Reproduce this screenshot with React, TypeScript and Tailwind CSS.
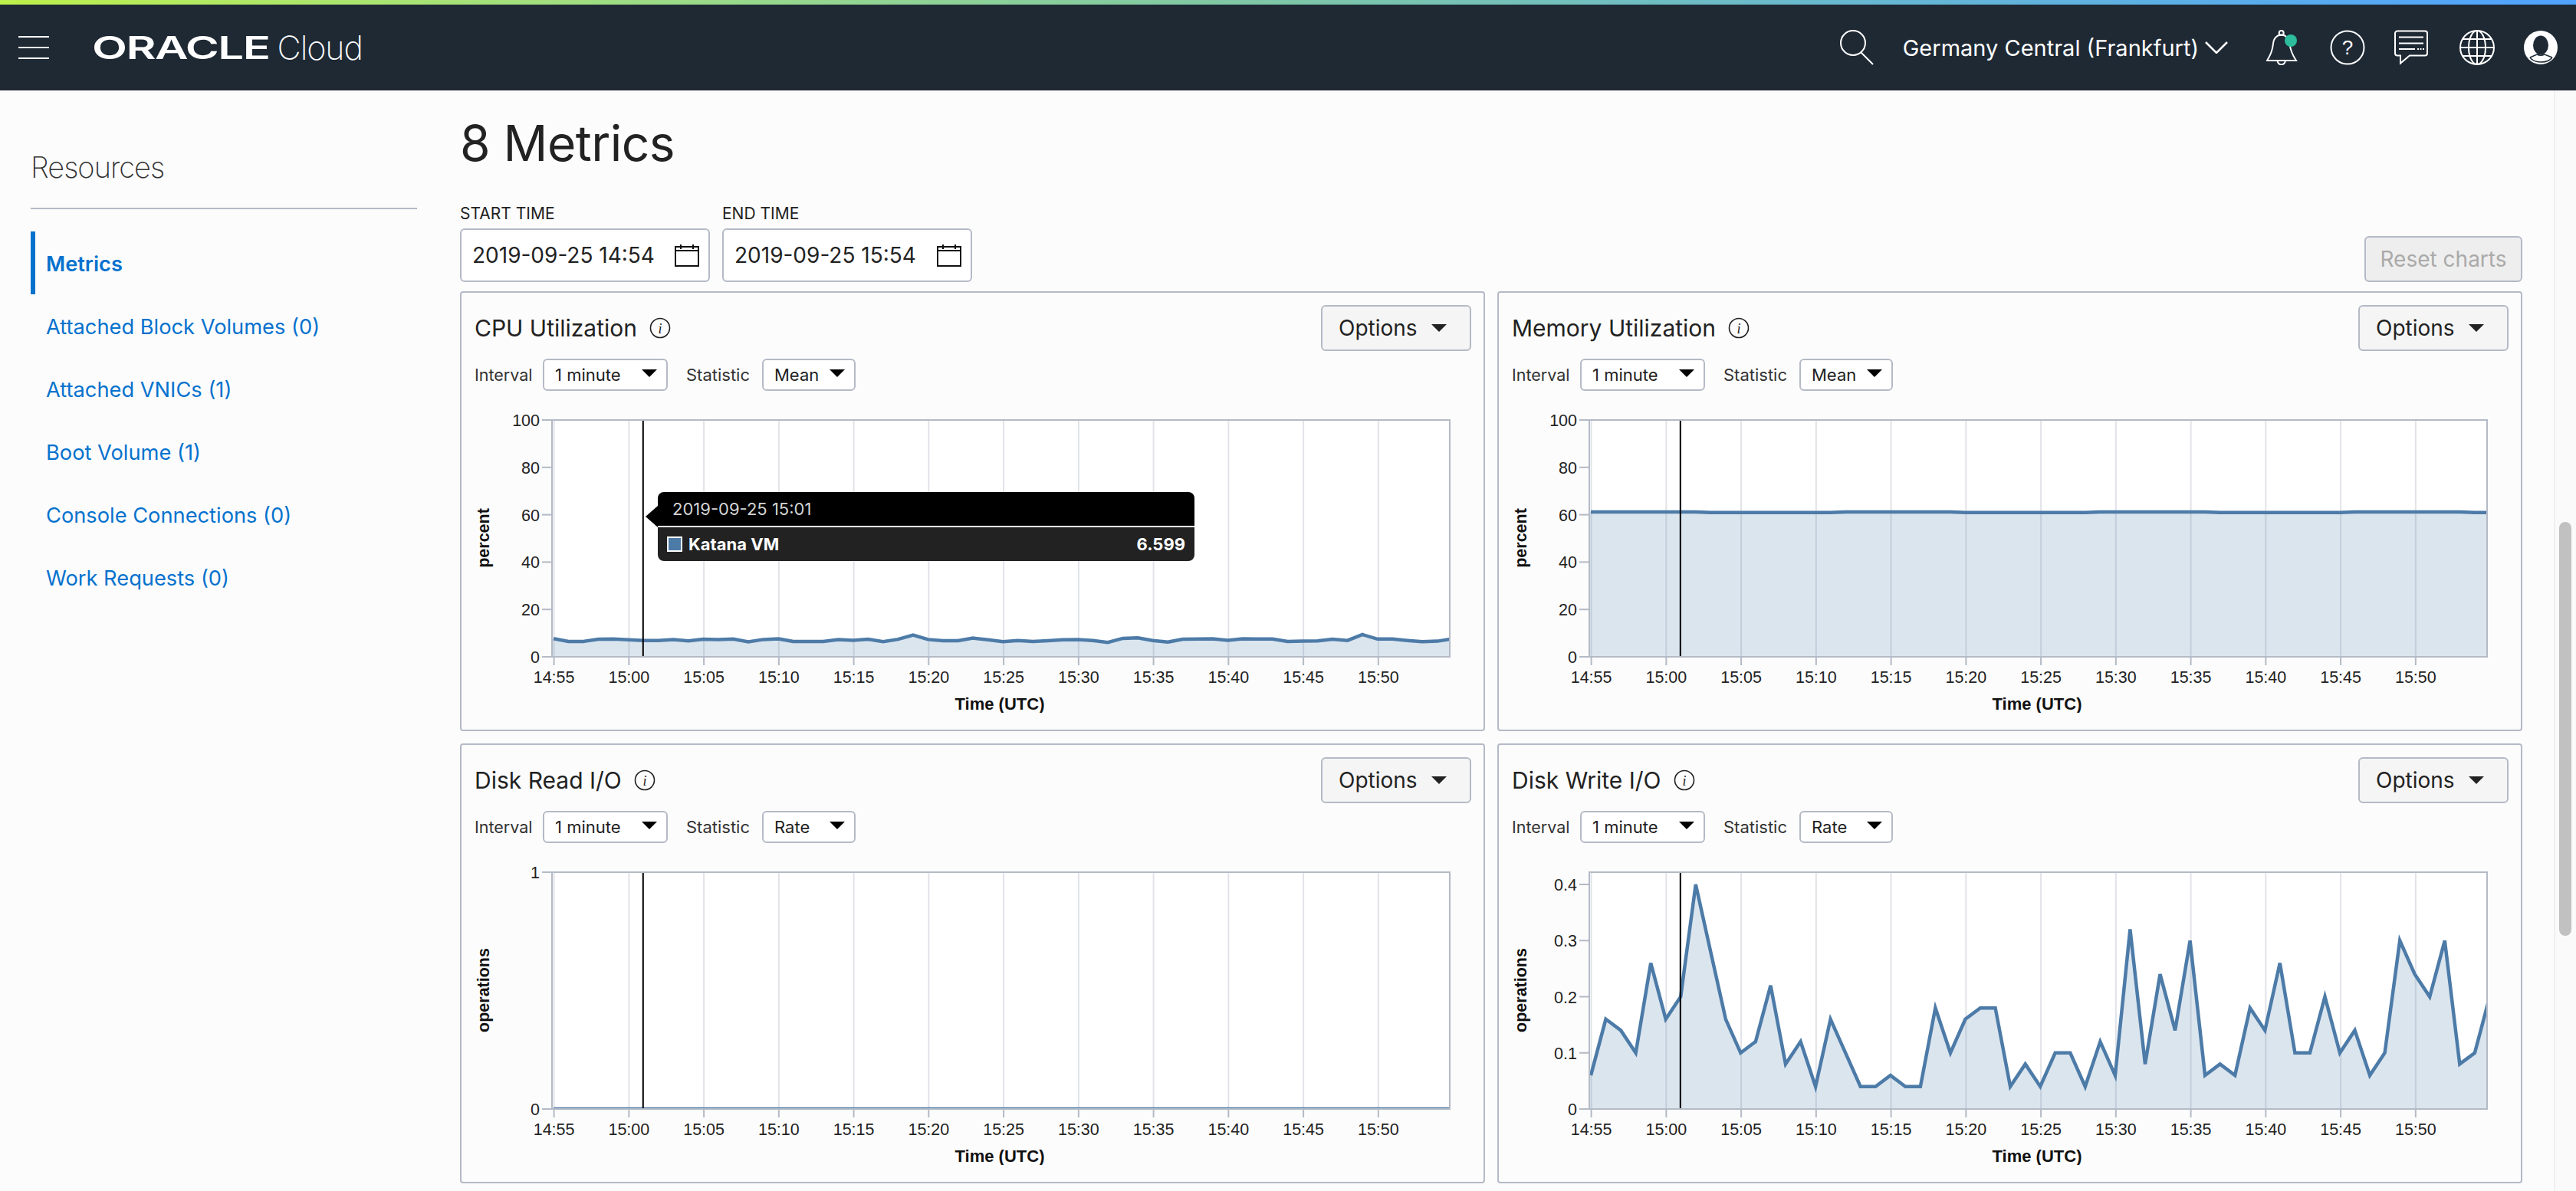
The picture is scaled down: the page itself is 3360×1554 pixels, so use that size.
import type { ReactNode } from "react";

const cpu = [7.7, 6.5, 6.5, 7.4, 7.5, 7.2, 6.9, 6.9, 7.3, 6.7, 7.4, 7.3, 7.5, 6.3, 7.3, 7.6, 6.5, 6.5, 6.5, 7.3, 7.0, 7.4, 6.4, 7.4, 9.2, 7.3, 6.8, 6.8, 7.9, 7.2, 6.4, 6.9, 6.5, 6.8, 7.2, 7.3, 6.9, 6.1, 7.8, 8.0, 6.9, 6.2, 7.4, 7.5, 7.6, 7.0, 7.6, 7.5, 7.5, 6.5, 6.6, 6.7, 7.4, 6.9, 9.4, 7.5, 7.5, 6.9, 6.4, 6.6, 7.6];
const memory = cpu.map((_, i) => 61 + (i % 17 < 8 ? 0.15 : -0.1));
const diskRead = cpu.map(() => 0);
const diskWrite = [0.06, 0.16, 0.14, 0.1, 0.26, 0.16, 0.2, 0.4, 0.28, 0.16, 0.1, 0.12, 0.22, 0.08, 0.12, 0.04, 0.16, 0.1, 0.04, 0.04, 0.06, 0.04, 0.04, 0.18, 0.1, 0.16, 0.18, 0.18, 0.04, 0.08, 0.04, 0.1, 0.1, 0.04, 0.12, 0.06, 0.32, 0.08, 0.24, 0.14, 0.3, 0.06, 0.08, 0.06, 0.18, 0.14, 0.26, 0.1, 0.1, 0.2, 0.1, 0.14, 0.06, 0.1, 0.3, 0.24, 0.2, 0.3, 0.08, 0.1, 0.2];

const timeLabels = ["14:55", "15:00", "15:05", "15:10", "15:15", "15:20", "15:25", "15:30", "15:35", "15:40", "15:45", "15:50"];
const resources = ["Attached Block Volumes (0)", "Attached VNICs (1)", "Boot Volume (1)", "Console Connections (0)", "Work Requests (0)"];

const plot = { left: 101, right: 1272, top: 18, bottom: 327 };

function Chart({ id, data, scale, ticks, unit, children }: { id: string; data: number[]; scale: number; ticks: [number, string][]; unit: string; children?: ReactNode }) {
  const px = (i: number) => 103 + i * 19.54;
  const py = (v: number) => plot.bottom - v * scale;
  const line = data.map((v, i) => `${px(i).toFixed(1)},${py(v).toFixed(1)}`).join(" ");
  const area = `${plot.left},${py(data[0])} ${line} ${px(60)},${plot.bottom} ${plot.left},${plot.bottom}`;

  return (
    <div className="relative mt-5 h-[400px] w-[1299px]">
      <svg width="1299" height="400" viewBox="0 0 1299 400" className="block font-['Liberation_Sans',sans-serif]">
        <defs>
          <clipPath id={id}>
            <rect x={plot.left} y={plot.top} width={plot.right - plot.left} height={plot.bottom - plot.top} />
          </clipPath>
        </defs>
        <rect x={plot.left} y={plot.top} width={plot.right - plot.left} height={plot.bottom - plot.top} fill="#ffffff" />
        {timeLabels.map((t, i) => {
          const x = 103.6 + i * 97.75;
          return (
            <g key={t}>
              <line x1={x} x2={x} y1={plot.top} y2={plot.bottom} stroke="#e1e3e8" strokeWidth="2" />
              <line x1={x} x2={x} y1={plot.bottom} y2={plot.bottom + 11} stroke="#b4bac6" strokeWidth="2" />
              <text x={x} y={361} textAnchor="middle" fontSize="21.5" fill="#222222">{t}</text>
            </g>
          );
        })}
        <g clipPath={`url(#${id})`}>
          <polygon points={area} fill="#4d7ba8" fillOpacity="0.2" />
          <polyline points={line} fill="none" stroke="#4d7ba8" strokeWidth="4.5" strokeLinejoin="miter" />
        </g>
        <line x1={219.8} x2={219.8} y1={plot.top} y2={plot.bottom} stroke="#000000" strokeWidth="2" />
        <rect x={plot.left} y={plot.top} width={plot.right - plot.left} height={plot.bottom - plot.top} fill="none" stroke="#b4bac6" strokeWidth="2" />
        {ticks.map(([v, label]) => (
          <g key={label}>
            <line x1={plot.left - 13} x2={plot.left} y1={py(v)} y2={py(v)} stroke="#b4bac6" strokeWidth="2" />
            <text x={85} y={py(v) + 8} textAnchor="end" fontSize="21.5" fill="#222222">{label}</text>
          </g>
        ))}
        <text x={685} y={396} textAnchor="middle" fontSize="22" fontWeight="700" fill="#111111">Time (UTC)</text>
        <text transform="translate(19 172) rotate(-90)" textAnchor="middle" fontSize="21.5" fontWeight="700" fill="#111111">{unit}</text>
      </svg>
      {children}
    </div>
  );
}

function Caret({ className }: { className: string }) {
  return (
    <svg viewBox="0 0 20 10" className={className} fill="currentColor">
      <path d="M0 0h20L10 10z" />
    </svg>
  );
}

function InfoIcon() {
  return (
    <svg width="28" height="28" viewBox="0 0 28 28" className="ml-4 shrink-0">
      <circle cx="14" cy="14" r="12.5" fill="none" stroke="#222222" strokeWidth="1.6" />
      <text x="14" y="20.5" textAnchor="middle" fontSize="18" fontStyle="italic" fill="#222222" className="font-['Liberation_Serif',serif]">i</text>
    </svg>
  );
}

function Select({ value, width }: { value: string; width: string }) {
  return (
    <div className={`flex h-[42px] items-start justify-between rounded-md border-2 border-[#b4bac6] bg-white pl-[14px] pr-[12px] ${width}`}>
      <span className="self-center text-[22px] leading-none text-[#222222]">{value}</span>
      <Caret className="mt-3 h-[10px] w-5 text-black" />
    </div>
  );
}

function MetricCard({ title, statistic, statisticWidth, children }: { title: string; statistic: string; statisticWidth: string; children: ReactNode }) {
  return (
    <section className="h-[574px] rounded border-2 border-[#b4bac6] bg-[#fcfcfc] pl-[17px] pr-[16px] pt-4">
      <div className="flex h-[60px] items-center justify-between">
        <div className="flex items-center">
          <h3 className="text-[30px] font-normal leading-none text-[#222222]">{title}</h3>
          <InfoIcon />
        </div>
        <button className="flex h-[60px] w-[196px] items-center justify-between rounded-md border-2 border-[#b4bac6] bg-[#f5f5f5] pl-[21px] pr-[30px] text-[28px] text-[#222222]">
          Options
          <Caret className="h-[10px] w-5 text-[#222222]" />
        </button>
      </div>
      <div className="mt-[10px] flex items-center text-[22px] text-[#333333]">
        <span className="w-[89px] text-[21.5px]">Interval</span>
        <Select value="1 minute" width="w-[163px]" />
        <span className="ml-6 w-[99px]">Statistic</span>
        <Select value={statistic} width={statisticWidth} />
      </div>
      {children}
    </section>
  );
}

function CalendarIcon() {
  return (
    <svg width="32" height="30" viewBox="0 0 32 30" fill="none" stroke="#111111" strokeWidth="2">
      <rect x="1" y="4" width="30" height="25" />
      <path d="M1 9h30M8 1v6M24 1v6" />
    </svg>
  );
}

function DateField({ label, value, className }: { label: string; value: string; className: string }) {
  return (
    <div className={className}>
      <div className="mb-[6px] h-[27px] text-[21px] leading-[27px] text-[#222222]">{label}</div>
      <div className="flex h-[70px] items-center justify-between rounded-md border-2 border-[#b4bac6] bg-white pl-[14px] pr-[12px]">
        <span className="text-[28px] text-[#222222]">{value}</span>
        <CalendarIcon />
      </div>
    </div>
  );
}

function TopBar() {
  return (
    <header className="h-[118px] shrink-0">
      <div className="h-[6px] bg-gradient-to-r from-[#bdf04a] via-[#7dc6a8] to-[#50a2ff]" />
      <div className="flex h-[112px] items-center bg-[#1e2934] text-white">
        <div className="ml-6 flex h-[30px] w-10 flex-col justify-between">
          <div className="h-[2px] bg-white" />
          <div className="h-[2px] bg-white" />
          <div className="h-[2px] bg-white" />
        </div>
        <div className="ml-14 flex w-[354px] items-center">
          <span className="inline-block origin-left scale-x-[1.46] text-[41px] font-semibold leading-none tracking-tight">ORACLE</span>
          <span className="ml-[83px] text-[43px] font-extralight leading-none tracking-tight">Cloud</span>
        </div>
        <div className="ml-auto flex items-center">
          <svg width="46" height="46" viewBox="0 0 46 46" fill="none" stroke="#ffffff" strokeWidth="2">
            <circle cx="17" cy="17" r="16" />
            <path d="M27 29l16 16" />
          </svg>
          <span className="ml-9 text-[29px] leading-none">Germany Central (Frankfurt)</span>
          <svg width="30" height="16" viewBox="0 0 30 16" fill="none" stroke="#ffffff" strokeWidth="2.5" className="ml-2">
            <path d="M1 1l14 14L29 1" />
          </svg>
          <svg width="44" height="46" viewBox="0 0 44 46" fill="none" stroke="#ffffff" strokeWidth="2" className="ml-[50px]">
            <circle cx="19.7" cy="4" r="3" />
            <path d="M1 40C5 34 8 28 9 18 9.5 11 14 6.5 19.7 6.5 25 6.5 30 11 30.5 18 31.5 28 35 34 39 40Z" />
            <path d="M14.5 40a5.2 5.2 0 0 0 10.4 0" />
            <circle cx="32" cy="14" r="8" fill="#2dbd9d" stroke="none" />
          </svg>
          <svg width="46" height="46" viewBox="0 0 46 46" fill="none" stroke="#ffffff" strokeWidth="2" className="ml-[39px]">
            <circle cx="23" cy="23" r="21.5" />
            <text x="23" y="32" textAnchor="middle" fontSize="26" fill="#ffffff" stroke="none" className="font-['Liberation_Sans',sans-serif]">?</text>
          </svg>
          <svg width="46" height="46" viewBox="0 0 46 46" fill="none" stroke="#ffffff" strokeWidth="2" className="ml-[38px]">
            <path d="M4 1.5h36a3 3 0 0 1 3 3v26a3 3 0 0 1-3 3H20l-12 10v-10H4a3 3 0 0 1-3-3v-26a3 3 0 0 1 3-3z" />
            <path d="M6 9.5h32M6 17.5h32M6 25h21M30 25h2M33.5 25h2M37 25h2" />
          </svg>
          <svg width="48" height="48" viewBox="0 0 48 48" fill="none" stroke="#ffffff" strokeWidth="2" className="ml-[38px]">
            <circle cx="24" cy="24" r="22" />
            <ellipse cx="24" cy="24" rx="11" ry="22" />
            <path d="M24 2v44M5 13h38M2 24h44M5 35h38" />
          </svg>
          <svg width="44" height="44" viewBox="0 0 44 44" className="ml-[37px] mr-[24px]">
            <circle cx="22" cy="22" r="22" fill="#ffffff" />
            <ellipse cx="22" cy="19" rx="10" ry="12.5" fill="#1e2934" />
            <path d="M8 35l9-4c3 1.5 7 1.5 10 0l10 4" fill="none" stroke="#1e2934" strokeWidth="1.5" />
            <path d="M8 35c6 8 23 8 29 0" fill="none" stroke="#1e2934" strokeWidth="1.5" />
          </svg>
        </div>
      </div>
    </header>
  );
}

export default function App() {
  return (
    <div className="flex h-[1554px] w-[3360px] flex-col overflow-hidden bg-[#fcfcfc] font-['Inter',sans-serif]">
      <TopBar />
      <div className="flex flex-1 overflow-hidden">
        {/* Sidebar */}
        <aside className="w-[600px] shrink-0 pl-10 pr-14">
          <h2 className="flex h-[155px] items-end border-b-2 border-[#b4bac6] pb-[34px] text-[38px] font-extralight leading-none tracking-[-1px] text-[#333333]">Resources</h2>
          <nav className="mt-[29px]">
            <div className="flex h-[82px] items-center border-l-[6px] border-[#0572ce] pl-[14px] pt-1 text-[27.25px] font-semibold text-[#0572ce]">Metrics</div>
            {resources.map((r) => (
              <div key={r} className="flex h-[82px] items-center pl-5 pt-1 text-[27.25px] text-[#0572ce]">{r}</div>
            ))}
          </nav>
        </aside>

        {/* Metrics */}
        <main className="w-[2690px] shrink-0">
          <h1 className="mt-[37px] h-[64px] text-[64px] font-normal leading-[64px] tracking-[-0.5px] text-[#222222]">8 Metrics</h1>
          <div className="mt-[46px] flex items-end">
            <DateField label="START TIME" value="2019-09-25 14:54" className="w-[326px]" />
            <DateField label="END TIME" value="2019-09-25 15:54" className="ml-4 w-[326px]" />
            <button className="ml-auto h-[60px] w-[206px] rounded-md border-2 border-[#b4bac6] bg-[#eeeeee] text-[28px] text-[#aaaaaa]">Reset charts</button>
          </div>
          <div className="mt-3 grid grid-cols-2 gap-4">
            <MetricCard title="CPU Utilization" statistic="Mean" statisticWidth="w-[122px]">
              <Chart id="cpu" data={cpu} scale={3.09} unit="percent" ticks={[[0, "0"], [20, "20"], [40, "40"], [60, "60"], [80, "80"], [100, "100"]]}>
                <div className="absolute left-[239px] top-[112px] w-[700px]">
                  <div className="absolute -left-4 top-[18px] h-0 w-0 border-y-[14px] border-r-[16px] border-y-transparent border-r-black" />
                  <div className="flex h-[44px] items-center rounded-t-lg bg-black pl-[19px] text-[22px] text-[#d4d4d4]">2019-09-25 15:01</div>
                  <div className="h-[2px] bg-white" />
                  <div className="flex h-[44px] items-center rounded-b-lg bg-[#222222] pl-3 pr-3 text-[22px] font-bold text-white">
                    <div className="h-5 w-5 border-2 border-white bg-[#4d7ba8]" />
                    <span className="ml-2">Katana VM</span>
                    <span className="ml-auto">6.599</span>
                  </div>
                </div>
              </Chart>
            </MetricCard>
            <MetricCard title="Memory Utilization" statistic="Mean" statisticWidth="w-[122px]">
              <Chart id="memory" data={memory} scale={3.09} unit="percent" ticks={[[0, "0"], [20, "20"], [40, "40"], [60, "60"], [80, "80"], [100, "100"]]} />
            </MetricCard>
            <MetricCard title="Disk Read I/O" statistic="Rate" statisticWidth="w-[122px]">
              <Chart id="read" data={diskRead} scale={309} unit="operations" ticks={[[0, "0"], [1, "1"]]} />
            </MetricCard>
            <MetricCard title="Disk Write I/O" statistic="Rate" statisticWidth="w-[122px]">
              <Chart id="write" data={diskWrite} scale={732.5} unit="operations" ticks={[[0, "0"], [0.1, "0.1"], [0.2, "0.2"], [0.3, "0.3"], [0.4, "0.4"]]} />
            </MetricCard>
          </div>
        </main>

        {/* Page scrollbar */}
        <div className="ml-auto w-[29px] border-l-2 border-[#efefef] bg-[#fafafa] pl-[5px]">
          <div className="mt-[563px] h-[540px] w-4 rounded-lg bg-[#c1c1c1]" />
        </div>
      </div>
    </div>
  );
}
